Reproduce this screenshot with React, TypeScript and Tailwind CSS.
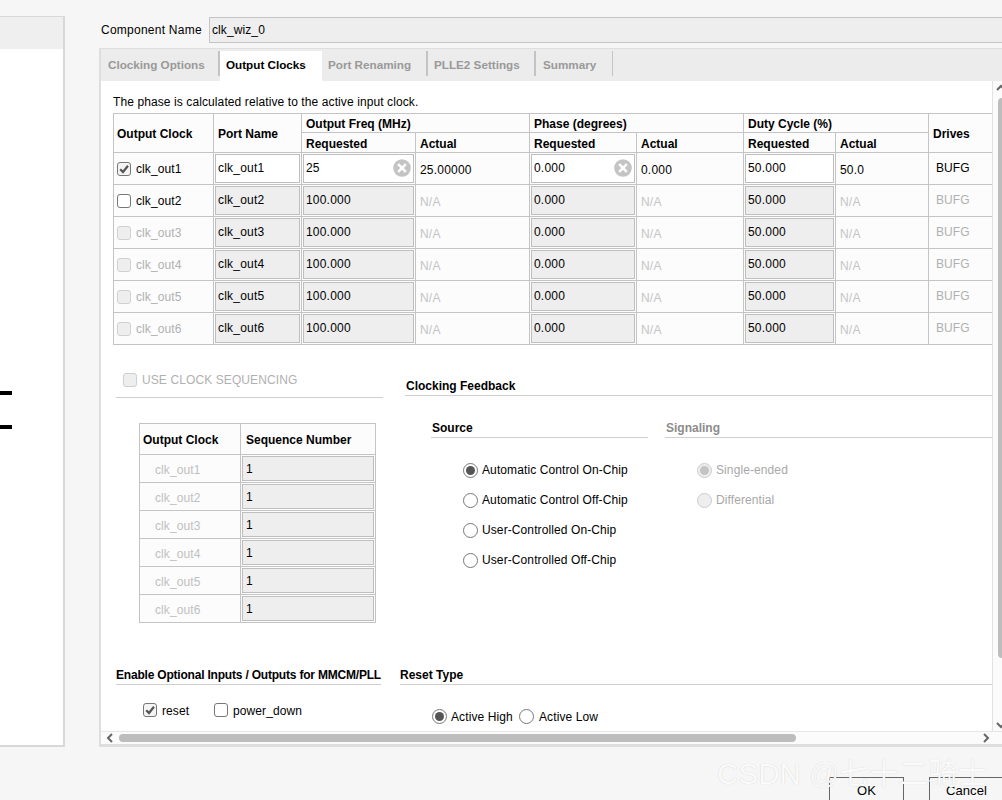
import React from 'react';

const Check = ({ checked = false, disabled = false }: { checked?: boolean; disabled?: boolean }) => (
    <span
        className={`w-[14px] h-[14px] shrink-0 rounded-[3px] border flex items-center justify-center ${
            disabled ? 'border-[#d0d0d0] bg-[#eeeeee]' : checked ? 'border-[#777777] bg-[#f4f4f4]' : 'border-[#777777] bg-white'
        }`}
    >
        {checked && (
            <svg viewBox="0 0 12 12" className="w-[12px] h-[12px]">
                <path d="M2.2 6.2 L5 9 L10 2.8" fill="none" stroke="#555555" strokeWidth="2.2" />
            </svg>
        )}
    </span>
);

const Radio = ({ checked = false, disabled = false }: { checked?: boolean; disabled?: boolean }) => (
    <span
        className={`w-[15px] h-[15px] shrink-0 rounded-full border flex items-center justify-center ${
            disabled ? 'border-[#cccccc] bg-[#eeeeee]' : 'border-[#777777] bg-white'
        }`}
    >
        {checked && (
            <span className={`w-[9px] h-[9px] rounded-full ${disabled ? 'bg-[#c4c4c4]' : 'bg-[#555555]'}`} />
        )}
    </span>
);

const ClearIcon = () => (
    <svg viewBox="0 0 18 18" className="w-[18px] h-[18px] shrink-0">
        <circle cx="9" cy="9" r="8.8" fill="#c4c4c4" />
        <path d="M5.2 5.2 L12.8 12.8 M12.8 5.2 L5.2 12.8" stroke="#ffffff" strokeWidth="2.6" />
    </svg>
);

const Field = ({
    value,
    enabled = false,
    clear = false,
    box = 'h-[29px] pb-[2px]',
}: {
    value: string;
    enabled?: boolean;
    clear?: boolean;
    box?: string;
}) => (
    <div
        className={`mx-[1px] ${box} pl-[2px] pr-[2px] border border-[#bfbfbf] flex items-center justify-between text-black ${
            enabled ? 'bg-white' : 'bg-[#eeeeee]'
        }`}
    >
        <span className="tracking-[0.2px]">{value}</span>
        {clear && <ClearIcon />}
    </div>
);

const Th = ({ children, first, ...rest }: React.ThHTMLAttributes<HTMLTableCellElement> & { first?: boolean }) => (
    <th
        {...rest}
        className={`border border-[#c4c4c4] ${first ? 'pl-[3px]' : 'pl-[4px]'} pt-[2px] text-left font-bold tracking-normal text-black bg-[#fcfcfc]`}
    >
        {children}
    </th>
);

const clocks = [1, 2, 3, 4, 5, 6];

const OutputTable = () => (
    <table className="table-fixed border-collapse w-[880px]">
        <colgroup>
            <col className="w-[100px]" />
            <col className="w-[88px]" />
            <col className="w-[114px]" />
            <col className="w-[114px]" />
            <col className="w-[107px]" />
            <col className="w-[107px]" />
            <col className="w-[92px]" />
            <col className="w-[93px]" />
            <col className="w-[65px]" />
        </colgroup>
        <thead>
            <tr className="h-[19px]">
                <Th rowSpan={2} first>Output Clock</Th>
                <Th rowSpan={2}>Port Name</Th>
                <Th colSpan={2}>Output Freq (MHz)</Th>
                <Th colSpan={2}>Phase (degrees)</Th>
                <Th colSpan={2}>Duty Cycle (%)</Th>
                <Th rowSpan={2}>Drives</Th>
            </tr>
            <tr className="h-[20px]">
                <Th>Requested</Th>
                <Th>Actual</Th>
                <Th>Requested</Th>
                <Th>Actual</Th>
                <Th>Requested</Th>
                <Th>Actual</Th>
            </tr>
        </thead>
        <tbody>
            {clocks.map((n) => {
                const first = n === 1;
                const off = n > 2;
                const actual = first ? 'text-black' : 'text-[#c4c4c4]';
                return (
                    <tr key={n} className="h-[32px] bg-[#fcfcfc]">
                        <td className="border border-[#c4c4c4] px-[3px]">
                            <div className="flex items-center gap-[5px]">
                                <Check checked={first} disabled={off} />
                                <span className={off ? 'text-[#b0b0b0]' : 'text-black'}>clk_out{n}</span>
                            </div>
                        </td>
                        <td className="border border-[#c4c4c4]">
                            <Field value={`clk_out${n}`} enabled={first} />
                        </td>
                        <td className="border border-[#c4c4c4]">
                            <Field value={first ? '25' : '100.000'} enabled={first} clear={first} />
                        </td>
                        <td className={`border border-[#c4c4c4] px-[4px] pt-[2px] tracking-[0.2px] ${actual}`}>{first ? '25.00000' : 'N/A'}</td>
                        <td className="border border-[#c4c4c4]">
                            <Field value="0.000" enabled={first} clear={first} />
                        </td>
                        <td className={`border border-[#c4c4c4] px-[4px] pt-[2px] tracking-[0.2px] ${actual}`}>{first ? '0.000' : 'N/A'}</td>
                        <td className="border border-[#c4c4c4]">
                            <Field value="50.000" enabled={first} />
                        </td>
                        <td className={`border border-[#c4c4c4] px-[4px] pt-[2px] tracking-[0.2px] ${actual}`}>{first ? '50.0' : 'N/A'}</td>
                        <td className={`border border-[#c4c4c4] pl-[7px] pb-[1px] ${first ? 'text-black' : 'text-[#b0b0b0]'}`}>
                            BUFG
                        </td>
                    </tr>
                );
            })}
        </tbody>
    </table>
);

const SequenceTable = () => (
    <table className="table-fixed border-collapse w-[236px] mt-[25px] ml-[23px]">
        <colgroup>
            <col className="w-[101px]" />
            <col className="w-[135px]" />
        </colgroup>
        <thead>
            <tr className="h-[31px]">
                <Th first>Output Clock</Th>
                <Th>
                    <span className="pl-[1px]">Sequence Number</span>
                </Th>
            </tr>
        </thead>
        <tbody>
            {clocks.map((n) => (
                <tr key={n} className="h-[28px] bg-[#fcfcfc]">
                    <td className="border border-[#c4c4c4] pl-[15px] pt-[2px] text-[#c0c0c0]">clk_out{n}</td>
                    <td className="border border-[#c4c4c4]">
                        <Field value="1" box="h-[25px] pl-[3px]" />
                    </td>
                </tr>
            ))}
        </tbody>
    </table>
);

const SectionTitle = ({
    label,
    muted = false,
    className = 'tracking-normal',
}: {
    label: string;
    muted?: boolean;
    className?: string;
}) => (
    <div className={`border-b border-[#cfcfcf] h-[18px] pt-[1px] font-bold whitespace-nowrap ${muted ? 'text-[#8c8c8c]' : 'text-black'} ${className}`}>
        {label}
    </div>
);

const RadioRow = ({ label, checked, disabled }: { label: string; checked?: boolean; disabled?: boolean }) => (
    <div className="flex items-center gap-[4px] h-[30px]">
        <Radio checked={checked} disabled={disabled} />
        <span className={disabled ? 'text-[#a8a8a8]' : 'text-black'}>{label}</span>
    </div>
);

const tabs = [
    { label: 'Clocking Options', box: 'w-[117px] pl-[7px]', sep: 'w-[2px]' },
    { label: 'Output Clocks', box: 'w-[102px] pl-[6px]', sep: '' },
    { label: 'Port Renaming', box: 'w-[104px] pl-[6px]', sep: 'w-[2px]' },
    { label: 'PLLE2 Settings', box: 'w-[106px] pl-[6px]', sep: 'w-[2px]' },
    { label: 'Summary', box: 'w-[76px] pl-[7px]', sep: 'w-[1px]' },
];

const Tabs = () => (
    <div className="h-[32px] bg-[#ececec] flex text-[11.7px] font-bold tracking-normal">
        {tabs.map((t, i) => (
            <React.Fragment key={t.label}>
                <div
                    className={`${t.box} flex items-center ${
                        i === 1 ? 'bg-white text-black mt-[2px] h-[30px] pb-[3px]' : 'text-[#999999] h-full pb-[1px]'
                    }`}
                >
                    {t.label}
                </div>
                {t.sep && <div className={`${t.sep} h-[25px] mt-[2px] bg-[#c4c4c4]`} />}
            </React.Fragment>
        ))}
    </div>
);

const Chevron = ({ d, className = '' }: { d: string; className?: string }) => (
    <svg viewBox="0 0 10 10" className={`w-[10px] h-[10px] shrink-0 ${className}`}>
        <path d={d} fill="none" stroke="#666666" strokeWidth="2" />
    </svg>
);

const App: React.FC = () => {
    return (
        <div className="relative w-[1002px] h-[800px] overflow-hidden bg-[#f6f6f6] text-[12px] leading-[14px] tracking-[0.1px] font-['Liberation_Sans',Arial,sans-serif]">
            <div className="flex h-[747px]">
                {/* left preview panel */}
                <div className="w-[65px] mt-[16px] bg-white border-t border-b-2 border-r-2 border-[#d8d8d8] shrink-0">
                    <div className="h-[32px] bg-[#efefef]" />
                    <div className="mt-[342px] flex flex-col gap-[30px]">
                        <div className="w-[12px] h-[4px] bg-black" />
                        <div className="w-[12px] h-[4px] bg-black" />
                    </div>
                </div>

                <div className="flex-1 ml-[34px] flex flex-col min-w-0">
                    <div className="flex items-center h-[26px] mt-[17px] pl-[2px]">
                        <span className="w-[108px] text-black tracking-[0.25px]">Component Name</span>
                        <div className="flex-1 h-full bg-[#eeeeee] border-y border-l border-[#c4c4c4] flex items-center pl-[2px] text-black">
                            clk_wiz_0
                        </div>
                    </div>

                    {/* wizard tabs */}
                    <div className="mt-[5px] flex-1 border-l-2 border-t border-b-[3px] border-[#dedede] flex flex-col min-h-0">
                        <Tabs />
                        <div className="flex-1 flex min-h-0 bg-white">
                            <div className="w-[891px] shrink-0 overflow-hidden pl-[12px]">
                                <p className="mt-[14px] h-[18px] text-black">The phase is calculated relative to the active input clock.</p>
                                <OutputTable />

                                <div className="flex mt-[26px]">
                                    <div className="w-[267px] ml-[3px] shrink-0">
                                        <div className="ml-[7px] flex items-center gap-[5px] h-[18px] text-[#b0b0b0]">
                                            <Check disabled />
                                            USE CLOCK SEQUENCING
                                        </div>
                                        <div className="border-b border-[#cfcfcf] mt-[8px]" />
                                        <SequenceTable />
                                    </div>
                                    <div className="flex-1 ml-[22px] mt-[7px]">
                                        <SectionTitle label="Clocking Feedback" className="pl-[1px] tracking-normal" />
                                        <div className="flex mt-[24px]">
                                            <div className="w-[217px] ml-[26px] shrink-0">
                                                <SectionTitle label="Source" className="pl-[1px] tracking-normal" />
                                                <div className="ml-[32px] mt-[17px]">
                                                    <RadioRow label="Automatic Control On-Chip" checked />
                                                    <RadioRow label="Automatic Control Off-Chip" />
                                                    <RadioRow label="User-Controlled On-Chip" />
                                                    <RadioRow label="User-Controlled Off-Chip" />
                                                </div>
                                            </div>
                                            <div className="flex-1 ml-[17px]">
                                                <SectionTitle label="Signaling" muted className="pl-[1px] tracking-normal" />
                                                <div className="ml-[32px] mt-[17px]">
                                                    <RadioRow label="Single-ended" checked disabled />
                                                    <RadioRow label="Differential" disabled />
                                                </div>
                                            </div>
                                        </div>
                                    </div>
                                </div>

                                <div className="flex mt-[44px]">
                                    <div className="w-[265px] ml-[3px] shrink-0">
                                        <SectionTitle label="Enable Optional Inputs / Outputs for MMCM/PLL" className="tracking-[-0.2px]" />
                                        <div className="flex mt-[18px] ml-[27px] h-[14px]">
                                            <div className="flex items-center gap-[5px] w-[71px] text-black">
                                                <Check checked />
                                                <span className="pt-[1px]">reset</span>
                                            </div>
                                            <div className="flex items-center gap-[5px] text-black">
                                                <Check />
                                                <span className="pt-[1px]">power_down</span>
                                            </div>
                                        </div>
                                    </div>
                                    <div className="flex-1 ml-[19px]">
                                        <SectionTitle label="Reset Type" />
                                        <div className="flex mt-[24px] ml-[32px] text-black">
                                            <div className="flex items-center gap-[4px] w-[88px]">
                                                <Radio checked />
                                                Active High
                                            </div>
                                            <div className="flex items-center gap-[4px] -ml-[1px]">
                                                <Radio />
                                                <span className="pl-[1px]">Active Low</span>
                                            </div>
                                        </div>
                                    </div>
                                </div>
                            </div>

                            {/* vertical scrollbar */}
                            <div className="flex-1 bg-[#fbfbfb] border-l border-[#e2e2e2] flex flex-col items-center pt-[2px] pb-[1px]">
                                <Chevron d="M1 7 L5 3 L9 7" className="ml-[2px]" />
                                <div className="w-[8px] h-[560px] mt-[5px] ml-[5px] rounded-[4px] bg-[#bdbdbd]" />
                                <div className="flex-1" />
                                <Chevron d="M1 3 L5 7 L9 3" className="ml-[2px]" />
                            </div>
                        </div>

                        {/* horizontal scrollbar */}
                        <div className="h-[13px] bg-[#fbfbfb] border-t border-[#e6e6e6] flex items-center pl-[4px] pr-[11px]">
                            <Chevron d="M7 1 L3 5 L7 9" />
                            <div className="w-[677px] h-[8px] ml-[4px] rounded-[4px] bg-[#bdbdbd]" />
                            <div className="flex-1" />
                            <Chevron d="M3 1 L7 5 L3 9" />
                        </div>
                    </div>
                </div>
            </div>

            {/* footer buttons */}
            <div className="flex mt-[30px] ml-[829px] text-[13px] text-black">
                <div className="w-[75px] h-[40px] border border-[#666666] bg-[#f6f6f6] flex justify-center pt-[6px] shrink-0">OK</div>
                <div className="w-[75px] h-[40px] ml-[25px] border border-[#666666] bg-[#f6f6f6] flex justify-center pt-[6px] shrink-0">Cancel</div>
            </div>

            {/* watermark */}
            <div className="absolute left-[717px] top-[756px] text-[29.5px] leading-[36px] whitespace-nowrap text-[#fafafa] [text-shadow:0_0_1px_rgba(0,0,0,0.18)] font-['Liberation_Sans','Noto_Sans_CJK_SC',sans-serif]">
                CSDN @七十二骑士
            </div>
        </div>
    );
};

export default App;
